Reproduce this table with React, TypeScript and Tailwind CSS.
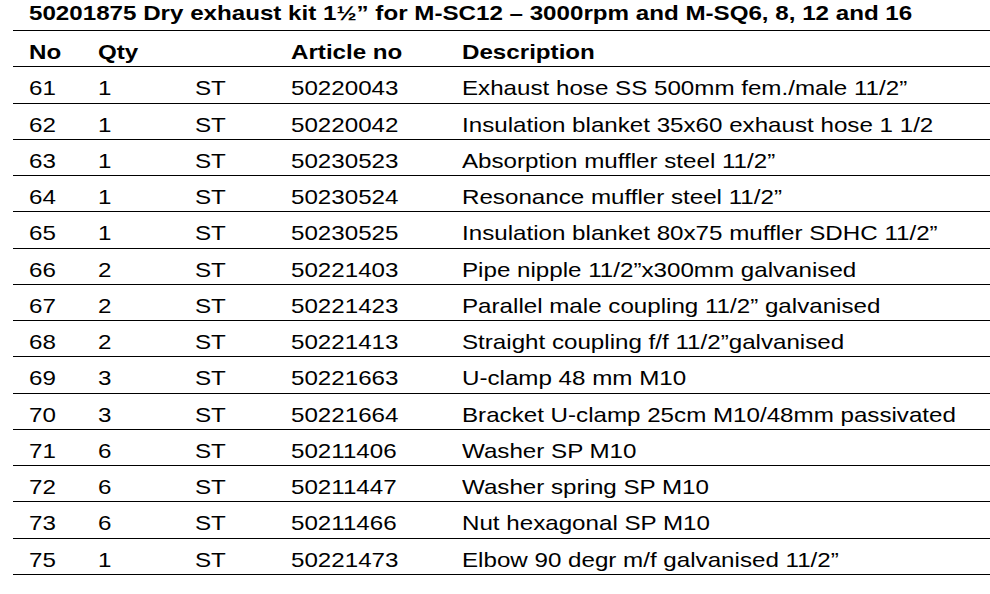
import React from "react";

const rows: [string, string, string, string, string][] = [
  ["61", "1", "ST", "50220043", "Exhaust hose SS 500mm fem./male 11/2\u201d"],
  ["62", "1", "ST", "50220042", "Insulation blanket 35x60 exhaust hose 1 1/2"],
  ["63", "1", "ST", "50230523", "Absorption muffler steel 11/2\u201d"],
  ["64", "1", "ST", "50230524", "Resonance muffler steel 11/2\u201d"],
  ["65", "1", "ST", "50230525", "Insulation blanket 80x75 muffler SDHC 11/2\u201d"],
  ["66", "2", "ST", "50221403", "Pipe nipple 11/2\u201dx300mm galvanised"],
  ["67", "2", "ST", "50221423", "Parallel male coupling 11/2\u201d galvanised"],
  ["68", "2", "ST", "50221413", "Straight coupling f/f 11/2\u201dgalvanised"],
  ["69", "3", "ST", "50221663", "U-clamp 48 mm M10"],
  ["70", "3", "ST", "50221664", "Bracket U-clamp 25cm M10/48mm passivated"],
  ["71", "6", "ST", "50211406", "Washer SP M10"],
  ["72", "6", "ST", "50211447", "Washer spring SP M10"],
  ["73", "6", "ST", "50211466", "Nut hexagonal SP M10"],
  ["75", "1", "ST", "50221473", "Elbow 90 degr m/f galvanised 11/2\u201d"],
];

function Row({ cells, bold }: { cells: string[]; bold?: boolean }) {
  return (
    <div
      className={`grid grid-cols-[69px_97px_96px_171px_1fr] h-[36.27px] border-b border-black pl-[16px] pt-[9px] text-[21px] leading-[24px] whitespace-nowrap ${
        bold ? "font-bold" : ""
      }`}
    >
      {cells.map((c, i) => (
        <div key={i}>
          <span className="inline-block origin-left scale-x-[1.15]">{c}</span>
        </div>
      ))}
    </div>
  );
}

export default function App() {
  return (
    <div
      className="w-[990px] h-[594px] bg-white text-black overflow-hidden"
      style={{ fontFamily: '"Liberation Sans", Arial, sans-serif' }}
    >
      <div className="h-[30px] pl-[29px] pt-[1px] text-[21px] leading-[24px] font-bold whitespace-nowrap">
        <span className="inline-block origin-left scale-x-[1.15]">
          50201875 Dry exhaust kit 1½” for M-SC12 – 3000rpm and M-SQ6, 8, 12 and 16
        </span>
      </div>
      <div className="ml-[13px] border-t border-black">
        <Row cells={["No", "Qty", "", "Article no", "Description"]} bold />
        {rows.map((r) => (
          <Row key={r[0]} cells={r} />
        ))}
      </div>
    </div>
  );
}
